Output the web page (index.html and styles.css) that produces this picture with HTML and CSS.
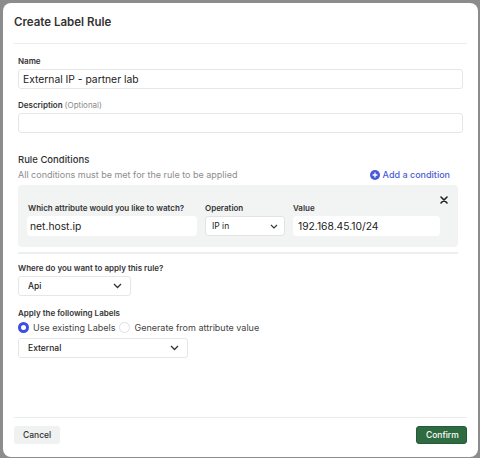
FILE: index.html
```html
<!DOCTYPE html>
<html>
<head>
<meta charset="utf-8">
<link rel="stylesheet" href="styles.css">
</head>
<body>
<div class="backdrop">
  <div class="modal">
    <div class="header">
      <h1 class="title">Create Label Rule</h1>
    </div>
    <div class="body">
      <div class="field">
        <div class="label">Name</div>
        <div class="input">External IP - partner lab</div>
      </div>
      <div class="field">
        <div class="label">Description <span class="optional">(Optional)</span></div>
        <div class="input"></div>
      </div>

      <div class="section">
        <div class="section-title">Rule Conditions</div>
        <div class="section-sub">
          <span>All conditions must be met for the rule to be applied</span>
          <span class="add-link">
            <svg width="10" height="10" viewBox="0 0 10 10"><circle cx="5" cy="5" r="5" fill="#4a5bd6"/><path d="M5 2.6v4.8M2.6 5h4.8" stroke="#fff" stroke-width="1.3"/></svg>
            Add a condition
          </span>
        </div>
        <div class="cond-box">
          <svg class="close" width="8" height="8" viewBox="0 0 8 8"><path d="M1 1l6 6M7 1l-6 6" stroke="#222" stroke-width="1.6" stroke-linecap="round"/></svg>
          <div class="cond-row">
            <div class="cond-col c1">
              <div class="label">Which attribute would you like to watch?</div>
              <div class="input white">net.host.ip</div>
            </div>
            <div class="cond-col c2">
              <div class="label">Operation</div>
              <div class="select white sm"><span>IP in</span><svg width="8" height="5" viewBox="0 0 8 5"><path d="M1 1l3 3 3-3" fill="none" stroke="#333" stroke-width="1.1"/></svg></div>
            </div>
            <div class="cond-col c3">
              <div class="label">Value</div>
              <div class="input white">192.168.45.10/24</div>
            </div>
          </div>
        </div>
        <div class="sep"></div>
      </div>

      <div class="field f-apply">
        <div class="label">Where do you want to apply this rule?</div>
        <div class="select api"><span>Api</span><svg width="9" height="6" viewBox="0 0 9 6"><path d="M1 1l3.5 3.5L8 1" fill="none" stroke="#333" stroke-width="1.3"/></svg></div>
      </div>

      <div class="field">
        <div class="label">Apply the following Labels</div>
        <div class="radios">
          <span class="radio on"></span><span class="rlabel">Use existing Labels</span>
          <span class="radio"></span><span class="rlabel">Generate from attribute value</span>
        </div>
        <div class="select ext"><span>External</span><svg width="9" height="6" viewBox="0 0 9 6"><path d="M1 1l3.5 3.5L8 1" fill="none" stroke="#333" stroke-width="1.3"/></svg></div>
      </div>
    </div>
    <div class="footer">
      <button class="btn cancel">Cancel</button>
      <button class="btn confirm">Confirm</button>
    </div>
  </div>
</div>
</body>
</html>
```

FILE: styles.css
```css
* { box-sizing: border-box; }
html, body { margin: 0; padding: 0; }
body {
  width: 480px;
  height: 458px;
  background: #8c8c8c;
  font-family: Inter, "Open Sans", sans-serif;
  color: #2b2b2b;
  overflow: hidden;
}
.backdrop {
  padding: 3px 2px 1px 3px;
  height: 458px;
}
.modal {
  background: #fff;
  border-radius: 8px;
  height: 454px;
  display: flex;
  flex-direction: column;
  padding: 0 11px;
}
.header {
  height: 41px;
  border-bottom: 1px solid #ececec;
  display: flex;
  align-items: center;
}
.title {
  margin: 0;
  font-size: 11.5px;
  font-weight: 600;
  color: #333;
  position: relative;
  top: -1px;
}
.body {
  flex: 1;
  padding: 12px 4px 0 4px;
}
.field { margin-bottom: 11px; }
.label {
  font-size: 8px;
  font-weight: 600;
  color: #333;
  margin-bottom: 2px;
  line-height: 11px;
}
.optional { color: #8a8a8a; font-weight: 400; }
.input, .select {
  height: 20px;
  border: 1px solid #e6e6e6;
  border-radius: 3px;
  background: #fff;
  font-size: 10.3px;
  line-height: 18px;
  padding: 0 4px;
  color: #222;
}
.field > .input { width: 445px; }
.section { margin-top: 20px; }
.section-title {
  font-size: 9.5px;
  font-weight: 500;
  color: #333;
  line-height: 13px;
}
.section-sub {
  display: flex;
  justify-content: space-between;
  align-items: center;
  font-size: 9px;
  color: #8d8d8d;
  margin-top: 3px;
  width: 432px;
  line-height: 12px;
}
.add-link {
  color: #4a5bd6;
  font-weight: 500;
  display: flex;
  align-items: center;
  gap: 3px;
}
.cond-box {
  position: relative;
  background: #f2f3f3;
  border-radius: 4px;
  width: 440px;
  height: 62px;
  margin-top: 4px;
  padding: 18px 10px 0 9px;
}
.close { position: absolute; right: 10px; top: 11px; }
.cond-row { display: flex; gap: 8px; }
.cond-col .label { margin-bottom: 2px; }
.c1 { width: 170px; }
.c1 .label { padding-left: 1px; }
.c1 .input { padding-left: 2px; }
.c2 { width: 80px; }
.c3 { width: 147px; }
.white { border-color: #fff; background: #fff; }
.select {
  display: flex;
  align-items: center;
  justify-content: space-between;
  padding: 0 8px 0 9px;
}
.select.sm { border-color: #e3e3e3; font-size: 8.5px; padding: 0 6px 0 6px; }
.sep {
  width: 440px;
  height: 2px;
  background: #eeeeee;
  margin-top: 5px;
}
.f-apply { margin-top: 9px; margin-bottom: 12px; }
.api { width: 113px; font-size: 8.5px; font-weight: 500; }
.ext { width: 170px; font-size: 8.5px; font-weight: 500; }
.radios {
  display: flex;
  align-items: center;
  margin-top: 1px;
  margin-bottom: 5px;
  font-size: 9px;
  color: #444;
  height: 12px;
}
.radio {
  width: 11px;
  height: 11px;
  border-radius: 50%;
  border: 1px solid #e0e0e0;
  margin-right: 4px;
  background: #fff;
}
.radio.on { border: 3px solid #3c4fe0; }
.rlabel { margin-right: 4px; }
.footer {
  border-top: 1px solid #ececec;
  height: 37px;
  display: flex;
  justify-content: space-between;
  align-items: flex-start;
  padding-top: 8px;
  margin-bottom: 3px;
}
.btn {
  font-family: Inter, "Open Sans", sans-serif;
  font-size: 8.5px;
  font-weight: 500;
  height: 18px;
  border-radius: 3px;
  border: none;
  padding: 0 9px;
}
.cancel { background: #f0f1f1; color: #333; width: 46px; }
.confirm { background: #2f6b40; color: #fff; width: 51px; border: 1px solid #28573a; }
```
